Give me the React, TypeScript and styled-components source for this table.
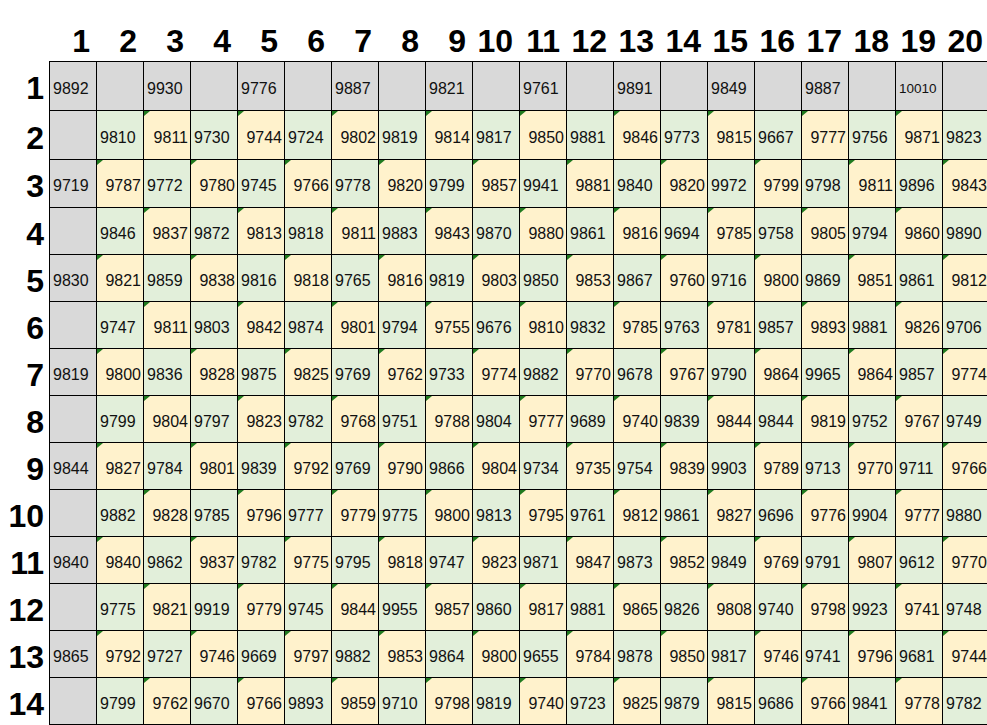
import React from "react";
import styled, { createGlobalStyle, css } from "styled-components";

const GlobalStyle = createGlobalStyle`
  html, body {
    margin: 0;
    padding: 0;
    background: #ffffff;
    overflow: hidden;
  }

  body {
    font-family: "Liberation Sans", Arial, sans-serif;
  }
`;

type Tone = "grey" | "green" | "yellow";

const toneColors: Record<Tone, string> = {
  grey: "#d9d9d9",
  green: "#e2efda",
  yellow: "#fff2cc",
};

// first row / first column values (grey cells)
const topRow: (number | null)[] = [
  9892, null, 9930, null, 9776, null, 9887, null, 9821, null,
  9761, null, 9891, null, 9849, null, 9887, null, 10010, null,
];

const firstCol: (number | null)[] = [
  9892, null, 9719, null, 9830, null, 9819, null, 9844, null, 9840, null, 9865, null,
];

// rows 2..14, columns 2..20
const body: number[][] = [
  [9810, 9811, 9730, 9744, 9724, 9802, 9819, 9814, 9817, 9850, 9881, 9846, 9773, 9815, 9667, 9777, 9756, 9871, 9823],
  [9787, 9772, 9780, 9745, 9766, 9778, 9820, 9799, 9857, 9941, 9881, 9840, 9820, 9972, 9799, 9798, 9811, 9896, 9843],
  [9846, 9837, 9872, 9813, 9818, 9811, 9883, 9843, 9870, 9880, 9861, 9816, 9694, 9785, 9758, 9805, 9794, 9860, 9890],
  [9821, 9859, 9838, 9816, 9818, 9765, 9816, 9819, 9803, 9850, 9853, 9867, 9760, 9716, 9800, 9869, 9851, 9861, 9812],
  [9747, 9811, 9803, 9842, 9874, 9801, 9794, 9755, 9676, 9810, 9832, 9785, 9763, 9781, 9857, 9893, 9881, 9826, 9706],
  [9800, 9836, 9828, 9875, 9825, 9769, 9762, 9733, 9774, 9882, 9770, 9678, 9767, 9790, 9864, 9965, 9864, 9857, 9774],
  [9799, 9804, 9797, 9823, 9782, 9768, 9751, 9788, 9804, 9777, 9689, 9740, 9839, 9844, 9844, 9819, 9752, 9767, 9749],
  [9827, 9784, 9801, 9839, 9792, 9769, 9790, 9866, 9804, 9734, 9735, 9754, 9839, 9903, 9789, 9713, 9770, 9711, 9766],
  [9882, 9828, 9785, 9796, 9777, 9779, 9775, 9800, 9813, 9795, 9761, 9812, 9861, 9827, 9696, 9776, 9904, 9777, 9880],
  [9840, 9862, 9837, 9782, 9775, 9795, 9818, 9747, 9823, 9871, 9847, 9873, 9852, 9849, 9769, 9791, 9807, 9612, 9770],
  [9775, 9821, 9919, 9779, 9745, 9844, 9955, 9857, 9860, 9817, 9881, 9865, 9826, 9808, 9740, 9798, 9923, 9741, 9748],
  [9792, 9727, 9746, 9669, 9797, 9882, 9853, 9864, 9800, 9655, 9784, 9878, 9850, 9817, 9746, 9741, 9796, 9681, 9744],
  [9799, 9762, 9670, 9766, 9893, 9859, 9710, 9798, 9819, 9740, 9723, 9825, 9879, 9815, 9686, 9766, 9841, 9778, 9782],
];

const COLS = 20;
const ROWS = 14;

const Sheet = styled.div`
  display: grid;
  grid-template-columns: 49px 48px repeat(19, 47px);
  grid-template-rows: 61px 50px 49px 48px repeat(11, 47px);
  width: max-content;
`;

const Corner = styled.div``;

const HeadLabel = styled.div`
  display: flex;
  justify-content: flex-end;
  font-family: "Liberation Sans", Arial, sans-serif;
  font-weight: 700;
  font-size: 32px;
  line-height: 32px;
  color: #000;
`;

const ColHeader = styled(HeadLabel)`
  align-items: flex-end;
  padding: 0 7px 4px 0;
`;

const RowHeader = styled(HeadLabel)`
  align-items: center;
  padding: 4px 5px 0 0;
`;

const Cell = styled.div<{
  $tone: Tone;
  $flag?: boolean;
  $small?: boolean;
  $left?: boolean;
  $top?: boolean;
}>`
  position: relative;
  display: flex;
  align-items: center;
  justify-content: ${({ $tone }) => ($tone === "yellow" ? "flex-end" : "flex-start")};
  padding: 5px 2px 0 3px;
  box-sizing: border-box;
  background: ${({ $tone }) => toneColors[$tone]};
  border-right: 1px solid #000;
  border-bottom: 1px solid #000;
  ${({ $left }) => $left && css`border-left: 1px solid #000;`}
  ${({ $top }) => $top && css`border-top: 1px solid #000;`}
  font-family: "Liberation Sans", Arial, sans-serif;
  font-size: ${({ $small }) => ($small ? "13.5px" : "16px")};
  color: #111;
  white-space: nowrap;
  overflow: hidden;

  /* little green corner mark */
  ${({ $flag }) =>
    $flag &&
    css`
      &::before {
        content: "";
        position: absolute;
        top: 0;
        left: 0;
        border-top: 5px solid #1f7a1f;
        border-right: 6px solid transparent;
      }
    `}
`;

const valueAt = (row: number, col: number): number | null => {
  if (row === 1) return topRow[col - 1];
  if (col === 1) return firstCol[row - 1];
  const line = body[row - 2];
  return line ? line[col - 2] : null;
};

export default function App() {
  const rows = Array.from({ length: ROWS }, (_, i) => i + 1);
  const cols = Array.from({ length: COLS }, (_, i) => i + 1);

  return (
    <>
      <GlobalStyle />
      <Sheet>
        <Corner />
        {cols.map((c) => (
          <ColHeader key={`h${c}`}>{c}</ColHeader>
        ))}
        {rows.map((r) => (
          <React.Fragment key={r}>
            <RowHeader>{r}</RowHeader>
            {cols.map((c) => {
              const grey = r === 1 || c === 1;
              const tone: Tone = grey ? "grey" : (r + c) % 2 === 1 ? "yellow" : "green";
              const value = valueAt(r, c);
              return (
                <Cell
                  key={c}
                  $tone={tone}
                  $flag={tone === "yellow"}
                  $small={value !== null && value >= 10000}
                  $left={c === 1}
                  $top={r === 1}
                >
                  {value ?? ""}
                </Cell>
              );
            })}
          </React.Fragment>
        ))}
      </Sheet>
    </>
  );
}
